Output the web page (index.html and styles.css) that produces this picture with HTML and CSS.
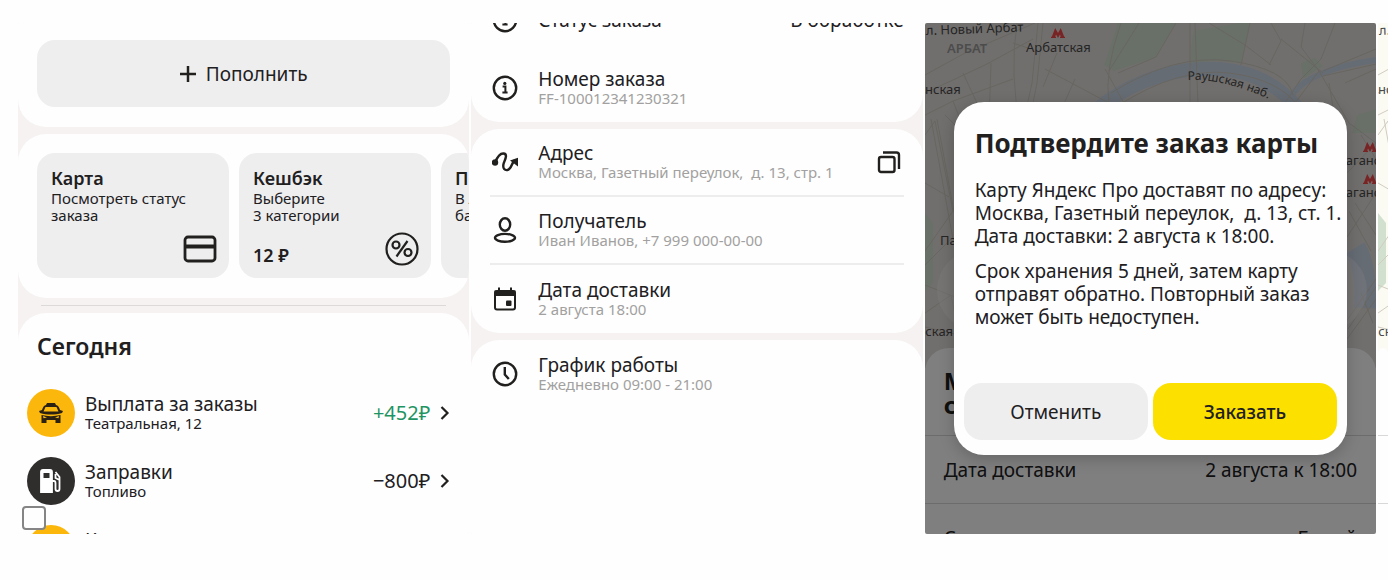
FILE: index.html
```html
<!DOCTYPE html>
<html lang="ru">
<head>
  <meta charset="UTF-8" />
  <meta name="viewport" content="width=device-width, initial-scale=1.0" />
  <title>Карта Яндекс Про</title>
  <link rel="stylesheet" href="styles.css">
</head>
<body>
  <svg class="defs" aria-hidden="true">
    <symbol id="info" viewBox="0 0 26 26">
      <circle cx="13" cy="13" r="11.2" fill="none" stroke="currentColor" stroke-width="2.4"/>
      <circle cx="12.8" cy="8.4" r="1.6" fill="currentColor"/>
      <path d="M10.6 11.4h2.800v6M10.400 17.600h5.200" fill="none" stroke="currentColor" stroke-width="2"/>
    </symbol>
    <symbol id="chevron" viewBox="0 0 10 16">
      <path d="M1.5 2L7.500 8l-6 6" fill="none" stroke="currentColor" stroke-width="2.200"/>
    </symbol>
    <symbol id="metro" viewBox="0 0 14 10">
      <path d="M0 10V8.700h.8L4.200 0 7 5 9.800 0l3.400 8.700h.8V10H9V8.700h.8L9 6.500 7 10 5 6.500l-.8 2.200H5V10z" fill="#f04848"/>
    </symbol>
    <symbol id="city" viewBox="0 0 451 345" preserveAspectRatio="xMinYMin slice">
      <g class="map-park">
        <path d="M193 0h58l-20 34-42 14-10-6z"/>
        <path d="M268 8l46-8h11l-9 40-26-2-25 2z"/>
        <path d="M376 40l14-5 8 8-20 13z"/>
        <path d="M432 92l19-6v24h-24z"/>
        <path d="M0 190l8 10v60l-8 8z"/>
      </g>
      <path class="map-water" d="M170 88Q215 50 275 46T372 84" stroke-width="14"/>
      <path class="map-water" d="M368 70Q388 46 451 37" stroke-width="6"/>
      <path class="map-water" d="M430 225q12 20 10 60" stroke-width="22"/>
      <g class="map-road">
        <path d="M113 0l-6 60-11 50M118 0l-6 60-10 50M92 0q-8 50 4 110M0 52l40-22 70-30M0 70l60-28 48-26M0 92l28-14 60-22M28 78l10 26M38 50l14 30M66 40l-2 60M120 46l64 34 30 40M150 56l-24 54M184 80q-5-32 12-80M180 46l20 36M214 0l-30 48M231 34l-38 16M251 0l-20 34M194 82q60-38 110-32t70 34M186 70q64-40 120-32t62 34M265 0v110M270 0l4 110M325 0l-9 42M284 0l36 22 26 20M346 0l10 18-12 24M380 0l-4 24 18 24 30 52 27 20M410 0l-14 36-20 20-16 24M356 16l42 34M398 48l53-22M398 53l53-12M394 48l-30 40M420 60l31-14M404 60l6 36M0 112l10-14 18 90-28 40M6 96l22 120M12 96l22 120M0 160l24 14M0 242l28-28M0 262l30 12M0 290l26-18 8 40-34-8M436 112l15 24M422 150l29-30M422 214l29-44M424 188l22 40M430 180l21 32M420 300l31-44M423 306l28-42M422 316l29-40M436 270l12 30M130 96l22-6 26 10M88 20l18 6M20 92l10 10M132 30l-14 34"/>
      </g>
      <rect x="12" y="227" width="430" height="80" rx="40" fill="#fff" fill-opacity=".35"/>
      <g class="map-text">
        <text x="1" y="12" transform="rotate(-2 1 12)">л. Новый Арбат</text>
        <text x="22" y="30" class="map-district">АРБАТ</text>
        <text x="101" y="29">Арбатская</text>
        <text x="-8" y="71">инская</text>
        <path id="quay" d="M263 57q34 -2 86 21" fill="none"/>
        <text class="map-small"><textPath href="#quay">Раушская наб.</textPath></text>
        <text x="414" y="142">Таганская</text>
        <text x="414" y="174">Таганская</text>
        <text x="15" y="222">Павелецкая</text>
        <text x="-7" y="313">вская</text>
      </g>
      <use href="#metro" x="126" y="5" width="14" height="10"/>
      <use href="#metro" x="438" y="119" width="14" height="10"/>
      <use href="#metro" x="438" y="151" width="14" height="10"/>
    </symbol>
  </svg>

  <main class="gallery">
    <section class="screen">
      <div class="card card-top">
        <button class="top-up" type="button">
          <svg width="16" height="16" viewBox="0 0 16 16"><path d="M8 0v16M0 8h16" stroke="currentColor" stroke-width="2.500"/></svg>
          Пополнить
        </button>
      </div>
      <div class="card tiles">
        <a class="tile" href="#">
          <h3>Карта</h3>
          <p>Посмотреть статус<br>заказа</p>
          <div class="tile-foot">
            <svg class="tile-icon" viewBox="0 0 34 34"><rect x="2" y="5" width="30" height="24" rx="3" fill="none" stroke="currentColor" stroke-width="2.800"/><path d="M2 14.500h30" stroke="currentColor" stroke-width="4"/></svg>
          </div>
        </a>
        <a class="tile" href="#">
          <h3>Кешбэк</h3>
          <p>Выберите<br>3 категории</p>
          <div class="tile-foot">
            <strong>12 ₽</strong>
            <svg class="tile-icon" viewBox="0 0 34 34" fill="none" stroke="currentColor" stroke-width="2.200"><circle cx="17" cy="17" r="15.500"/><circle cx="11" cy="13" r="3.500"/><circle cx="23" cy="20.500" r="3.500"/><path d="M22.500 9L11.500 24.500"/></svg>
          </div>
        </a>
        <a class="tile" href="#">
          <h3>Переводы</h3>
          <p>В любой<br>банк</p>
        </a>
      </div>
      <hr class="divider">
      <div class="card history">
        <h2>Сегодня</h2>
        <a class="operation" href="#">
          <span class="badge">
            <svg width="26" height="22" viewBox="0 0 26 22" fill="#2b2113"><path d="M9 1h8l1 2c2 .5 3 2 4 5l3 1-1 2c-7 2-15 2-22 0L1 9l3-1c1-3 2-4.500 4-5z"/><path d="M7.500 5h11l2 4.500H5.500z" fill="#fcb70c"/><path d="M3.500 13c6 1.500 13 1.500 19 0v8h-5v-3h-9v3h-5z"/><path d="M5 14l4 1.500-3.500.8zM21 14l-4 1.500 3.500.8z" fill="#fcb70c"/></svg>
          </span>
          <span class="text"><b>Выплата за заказы</b><small>Театральная, 12</small></span>
          <span class="amount income">+452₽</span>
          <svg class="chevron"><use href="#chevron"/></svg>
        </a>
        <a class="operation" href="#">
          <span class="badge badge-dark">
            <svg width="22" height="24" viewBox="0 0 22 24" fill="none" stroke="#fff" stroke-width="1.800"><path d="M1 23V3q0-2 2-2h7q2 0 2 2v20z" fill="#fff"/><path d="M3.500 4h6v5h-6z" fill="#302e2d" stroke="none"/><path d="M12 12h2q1.500 0 1.500 2v6q0 2 2 2t2-2V8l-4-5M15.500 5v4l4 2"/></svg>
          </span>
          <span class="text"><b>Заправки</b><small>Топливо</small></span>
          <span class="amount">−800₽</span>
          <svg class="chevron"><use href="#chevron"/></svg>
        </a>
        <a class="operation" href="#">
          <span class="badge"></span>
          <span class="text"><b>Комиссия</b><small>Сервис</small></span>
        </a>
      </div>
      <input class="select" type="checkbox" aria-label="Выбрать">
    </section>

    <section class="screen">
      <div class="card order order-first">
        <div class="row">
          <svg class="icon"><use href="#info"/></svg>
          <span class="text"><b>Статус заказа</b></span>
          <span class="value">В обработке</span>
        </div>
        <div class="row">
          <svg class="icon"><use href="#info"/></svg>
          <span class="text"><b>Номер заказа</b><small>FF-100012341230321</small></span>
        </div>
      </div>
      <div class="card order order-lined">
        <div class="row">
          <svg class="icon" viewBox="0 0 26 26"><circle cx="3" cy="13.500" r="3.200" fill="currentColor"/><path d="M3 13.500Q7 4 11.500 4.500c5 .5 1 7 0 10.500-1 5 1.500 6.500 4 6 4-1 4-7 7-9.500" fill="none" stroke="currentColor" stroke-width="2.400"/><path d="M18 11.500l8.500-3-.5 9z" fill="currentColor"/></svg>
          <span class="text"><b>Адрес</b><small>Москва, Газетный переулок,&nbsp; д. 13, стр. 1</small></span>
          <button class="copy" type="button" aria-label="Скопировать">
            <svg width="24" height="24" viewBox="0 0 24 24" fill="none" stroke="currentColor" stroke-width="2.400"><rect x="2" y="7" width="15.500" height="15" rx="2"/><path d="M6 2.500h13.500q2.500 0 2.500 2.500v14"/></svg>
          </button>
        </div>
        <div class="row">
          <svg class="icon" viewBox="0 0 26 26" fill="none" stroke="currentColor" stroke-width="2.400"><ellipse cx="13" cy="7.500" rx="5.200" ry="6.200"/><ellipse cx="13" cy="20.800" rx="10" ry="3.900"/></svg>
          <span class="text"><b>Получатель</b><small>Иван Иванов, +7 999 000-00-00</small></span>
        </div>
        <div class="row">
          <svg class="icon" viewBox="0 0 26 26"><rect x="3" y="5" width="20" height="18.500" rx="2" fill="none" stroke="currentColor" stroke-width="2"/><path d="M2.500 4.500h21V10h-21zM6 1.500h2V6H6zM18 1.500h2V6h-2z" fill="currentColor"/><rect x="14" y="14.500" width="5.500" height="5.500" rx="1" fill="currentColor"/></svg>
          <span class="text"><b>Дата доставки</b><small>2 августа 18:00</small></span>
        </div>
      </div>
      <div class="card order order-last">
        <div class="row">
          <svg class="icon" viewBox="0 0 26 26" fill="none" stroke="currentColor" stroke-width="2.400"><circle cx="13" cy="13" r="11.200"/><path d="M12.800 6v7.500l4 4.500"/></svg>
          <span class="text"><b>График работы</b><small>Ежедневно 09:00 - 21:00</small></span>
        </div>
      </div>
    </section>

    <section class="screen screen-map">
      <svg class="map map-shaded"><use href="#city"/></svg>
      <div class="sheet">
        <h2>Москва,<br>стр. 1</h2>
        <div class="sheet-row"><span>Дата доставки</span><span>2 августа к 18:00</span></div>
        <div class="sheet-row"><span>Состав заказа</span><span>Белый</span></div>
      </div>
      <div class="overlay">
        <div class="modal" role="dialog" aria-labelledby="modal-title">
          <h1 id="modal-title">Подтвердите заказ карты</h1>
          <p>Карту Яндекс Про доставят по адресу:<br>Москва, Газетный переулок,&nbsp; д. 13, ст. 1.<br>Дата доставки: 2 августа к 18:00.</p>
          <p>Срок хранения 5 дней, затем карту<br>отправят обратно. Повторный заказ<br>может быть недоступен.</p>
          <div class="actions">
            <button class="btn" type="button">Отменить</button>
            <button class="btn btn-primary" type="button">Заказать</button>
          </div>
        </div>
      </div>
    </section>

    <section class="screen screen-map">
      <svg class="map"><use href="#city"/></svg>
      <div class="sheet">
        <h2></h2>
        <div class="sheet-row"></div>
        <div class="sheet-row"></div>
      </div>
    </section>
  </main>
</body>
</html>
```
FILE: styles.css
```css
* {
  box-sizing: border-box;
}
body {
  margin: 0;
  font-family: 'Noto Sans', 'Open Sans', sans-serif;
  font-size: 19px;
  line-height: 22px;
  background: #fefefe;
  color: #21201f;
}
h1, h2, h3, p {
  margin: 0;
}
a {
  color: inherit;
  text-decoration: none;
}
button {
  border: none;
  padding: 0;
  font: inherit;
  color: inherit;
  background: none;
  cursor: pointer;
}
.defs {
  position: absolute;
  width: 0;
  height: 0;
}

/* horizontal strip of app screens, the last one peeks in */
.gallery {
  display: grid;
  grid-template-columns: repeat(3, 1fr) 10px;
  gap: 2px;
  padding: 23px 0 0 18px;
}
.screen {
  position: relative;
  display: flex;
  flex-direction: column;
  gap: 7px;
  height: 511px;
  min-width: 0;
  overflow: hidden;
  border-radius: 2px;
  background: #f5f2f1;
}
.card {
  flex: none;
  background: #fefefe;
  border-radius: 28px;
}

/* balance */
.card-top {
  padding: 17px 19px 20px;
  border-radius: 0 0 28px 28px;
}
.top-up {
  display: flex;
  align-items: center;
  justify-content: center;
  gap: 10px;
  width: 100%;
  height: 67px;
  border-radius: 18px;
  background: #eee;
}
.tiles {
  display: flex;
  gap: 10px;
  padding: 19px 0 20px 19px;
  overflow: hidden;
}
.tile {
  display: flex;
  flex-direction: column;
  flex: 0 0 192px;
  height: 125px;
  padding: 14px 12px 12px 14px;
  border-radius: 18px;
  background: #eee;
}
.tile h3 {
  font-size: 18px;
  line-height: 23px;
  font-weight: 600;
}
.tile p {
  font-size: 15px;
  line-height: 17px;
}
.tile-foot {
  display: flex;
  align-items: flex-end;
  margin-top: auto;
}
.tile-foot strong {
  font-size: 18px;
  font-weight: 600;
}
.tile-icon {
  width: 34px;
  height: 34px;
  margin-left: auto;
}
.divider {
  width: calc(100% - 46px);
  margin: 0 auto;
  border: none;
  border-top: 1px solid #dcdad9;
}
.history {
  padding: 19px 19px 0 9px;
  border-radius: 28px 28px 0 0;
}
.history h2 {
  margin: 0 0 29px 10px;
  font-size: 23px;
  line-height: 28px;
  font-weight: 600;
}
.operation {
  display: flex;
  align-items: center;
  gap: 10px;
  margin-bottom: 20px;
}
.badge {
  display: flex;
  align-items: center;
  justify-content: center;
  width: 48px;
  height: 48px;
  border-radius: 50%;
  background: #fcb70c;
}
.badge-dark {
  background: #302e2d;
}
.text {
  display: flex;
  flex-direction: column;
  flex: 1;
}
.text b {
  font-weight: 400;
  line-height: 21px;
}
.text small {
  font-size: 15px;
  line-height: 17px;
}
.amount {
  font-size: 20px;
}
.income {
  color: #1f9463;
}
.chevron {
  width: 10px;
  height: 16px;
}
.select {
  position: absolute;
  left: 4px;
  bottom: 4px;
  width: 24px;
  height: 24px;
  margin: 0;
  appearance: none;
  border: 2px solid #858585;
  border-radius: 4px;
  background: #fefefe;
}

/* order details */
.order {
  padding: 0 19px;
}
.order-first {
  margin-top: -37px;
  border-radius: 0 0 28px 28px;
}
.order-last {
  flex: 1;
  border-radius: 28px 28px 0 0;
}
.row {
  display: flex;
  align-items: center;
  height: 68px;
}
.order-lined .row:not(:last-child) {
  border-bottom: 2px solid #ededed;
}
.icon {
  width: 26px;
  height: 26px;
  margin: 0 20px 0 2px;
}
.row small {
  color: #a2a1a0;
}
.copy {
  width: 24px;
  height: 24px;
  margin-right: 3px;
}

/* map and confirmation */
.screen-map {
  gap: 0;
  background: #fbfaf3;
}
.map {
  width: 451px;
  height: 345px;
  flex: none;
  margin-bottom: -20px;
}
.map-shaded {
  background: #e2dedb;
}
.map-park {
  fill: #d2e0d0;
}
.map-water {
  fill: none;
  stroke: #ccd8e8;
}
.map-road {
  fill: none;
  stroke: #d0ccc0;
}
.map-text {
  font-size: 13px;
  fill: #4a4a4a;
}
.map-small {
  font-size: 12px;
}
.map-district {
  font-weight: 600;
  fill: #999;
}
.sheet {
  flex: 1 0 auto;
  border-radius: 24px 24px 0 0;
  background: #fefefe;
}
.sheet h2 {
  height: 87px;
  padding: 21px 19px 0;
  font-size: 24px;
  line-height: 24px;
}
.sheet-row {
  display: flex;
  align-items: center;
  justify-content: space-between;
  height: 68px;
  padding: 0 19px;
  border-top: 1px solid #d8d8d8;
}
.overlay {
  position: absolute;
  inset: 0;
  display: flex;
  align-items: center;
  padding: 0 29px;
  background: rgba(0, 0, 0, 0.5);
}
.modal {
  flex: 1;
  min-width: 0;
  padding: 25px 10px 15px;
  border-radius: 30px;
  background: #fefefe;
  box-shadow: 0 4px 16px rgba(0, 0, 0, 0.2);
}
.modal h1 {
  margin: 0 11px 20px;
  font-size: 26px;
  line-height: 32px;
  white-space: nowrap;
}
.modal p {
  margin: 0 11px 12px;
  line-height: 23px;
  white-space: nowrap;
}
.actions {
  display: flex;
  gap: 5px;
  margin-top: 54px;
}
.btn {
  flex: 1;
  height: 57px;
  border-radius: 18px;
  background: #eee;
}
.btn-primary {
  background: #fbe000;
  font-weight: 500;
}
```
